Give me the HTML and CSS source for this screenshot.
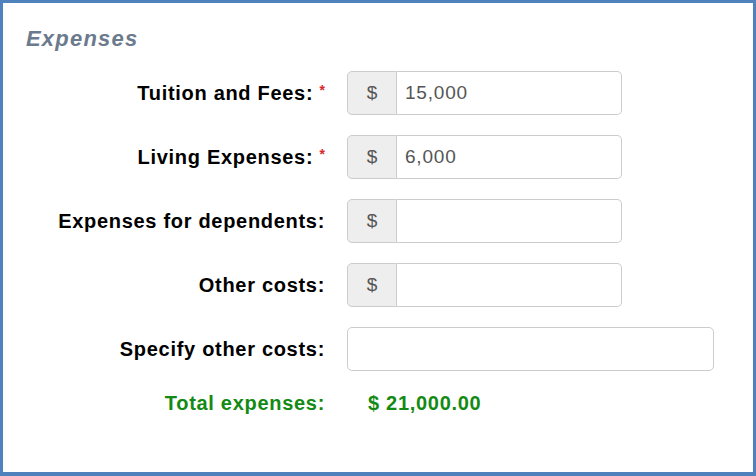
FILE: index.html
```
<!DOCTYPE html>
<html lang="en">
<head>
    <meta charset="utf-8">
    <title>Expenses</title>
    <link rel="stylesheet" href="styles.css">
</head>
<body>

    <div class="frame">
        <h3 class="section-title">Expenses</h3>

        <form class="expense-form">
            <label class="lbl" for="tuition">Tuition and Fees: <span class="req">*</span></label>
            <div class="input-group">
                <span class="addon">$</span>
                <input type="text" id="tuition" class="inp" value="15,000">
            </div>

            <label class="lbl" for="living">Living Expenses: <span class="req">*</span></label>
            <div class="input-group">
                <span class="addon">$</span>
                <input type="text" id="living" class="inp" value="6,000">
            </div>

            <label class="lbl" for="dependents">Expenses for dependents:</label>
            <div class="input-group">
                <span class="addon">$</span>
                <input type="text" id="dependents" class="inp">
            </div>

            <label class="lbl" for="other">Other costs:</label>
            <div class="input-group">
                <span class="addon">$</span>
                <input type="text" id="other" class="inp">
            </div>

            <label class="lbl" for="specify">Specify other costs:</label>
            <div>
                <input type="text" id="specify" class="inp inp-wide">
            </div>

            <span class="lbl total">Total expenses:</span>
            <span class="total total-value">$ 21,000.00</span>
        </form>
    </div>

</body>
</html>
```

FILE: styles.css
```
body {
    margin: 0;
    font-family: "Liberation Sans", Arial, sans-serif;
    background: #fff;
}

.frame {
    box-sizing: border-box;
    width: 756px;
    height: 476px;
    border: 3px solid #4f81bd;
    border-bottom-width: 4px;
    padding: 23px 23px 0 23px;
}

.section-title {
    margin: 0 0 20px 0;
    font-size: 22px;
    line-height: 25px;
    font-style: italic;
    font-weight: bold;
    letter-spacing: 1.2px;
    color: #6b7a8c;
}

.expense-form {
    display: grid;
    grid-template-columns: 299px 1fr;
    column-gap: 22px;
    row-gap: 20px;
    align-items: center;
}

.lbl {
    text-align: right;
    font-size: 20px;
    font-weight: bold;
    letter-spacing: 0.7px;
    color: #000;
}

.req {
    color: #d9262c;
    font-size: 14px;
    vertical-align: top;
    letter-spacing: 0;
}

.input-group {
    display: flex;
    width: 275px;
    height: 44px;
}

.addon {
    box-sizing: border-box;
    width: 50px;
    display: flex;
    align-items: center;
    justify-content: center;
    background: #eee;
    border: 1px solid #ccc;
    border-radius: 5px 0 0 5px;
    color: #555;
    font-size: 19px;
}

.inp {
    box-sizing: border-box;
    flex: 1;
    min-width: 0;
    height: 44px;
    margin: 0;
    padding: 0 8px;
    border: 1px solid #ccc;
    border-radius: 5px;
    font-family: "Liberation Sans", Arial, sans-serif;
    font-size: 19px;
    letter-spacing: 0.8px;
    color: #555;
}

.input-group .inp {
    border-left: none;
    border-radius: 0 5px 5px 0;
}

.inp-wide {
    display: block;
    width: 367px;
}

.total {
    font-size: 20px;
    font-weight: bold;
    line-height: 24px;
    letter-spacing: 0.7px;
    color: #138a13;
}

.total-value {
    text-align: left;
    padding-left: 21px;
}
```
